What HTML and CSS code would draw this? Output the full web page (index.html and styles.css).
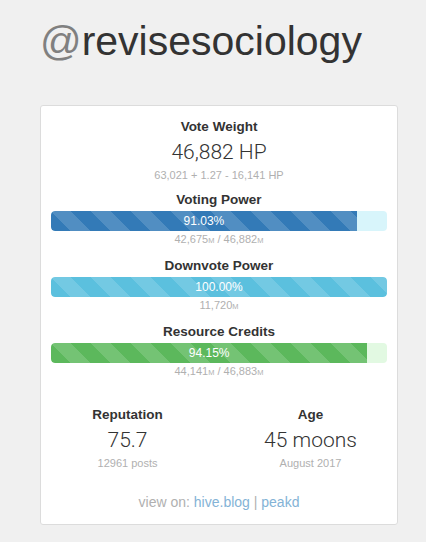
FILE: index.html
```html
<!DOCTYPE html>
<html lang="en">
<head>
  <meta charset="UTF-8" />
  <title>@revisesociology</title>
  <meta name="viewport" content="width=device-width, initial-scale=1.0" />
  <link rel="stylesheet" href="styles.css">
</head>
<body>
  <h1 class="account"><span class="at">@</span>revisesociology</h1>

  <div class="card">
    <h4 class="label">Vote Weight</h4>
    <div class="big">46,882 HP</div>
    <div class="sub">63,021 + 1.27 - 16,141 HP</div>

    <h4 class="label gap">Voting Power</h4>
    <div class="bar bar-vote">
      <div class="fill" style="width: 91.03%">91.03%</div>
    </div>
    <div class="sub">42,675<small>M</small> / 46,882<small>M</small></div>

    <h4 class="label gap">Downvote Power</h4>
    <div class="bar bar-down">
      <div class="fill full" style="width: 100%">100.00%</div>
    </div>
    <div class="sub">11,720<small>M</small></div>

    <h4 class="label gap">Resource Credits</h4>
    <div class="bar bar-rc">
      <div class="fill" style="width: 94.15%">94.15%</div>
    </div>
    <div class="sub">44,141<small>M</small> / 46,883<small>M</small></div>

    <div class="stats">
      <div class="stat">
        <h4 class="label">Reputation</h4>
        <div class="big">75.7</div>
        <div class="sub">12961 posts</div>
      </div>
      <div class="stat">
        <h4 class="label">Age</h4>
        <div class="big">45 moons</div>
        <div class="sub">August 2017</div>
      </div>
    </div>

    <p class="view-on">view on: <a href="#">hive.blog</a> | <a href="#">peakd</a></p>
  </div>
</body>
</html>
```

FILE: styles.css
```css
* {
  box-sizing: border-box;
  margin: 0;
  padding: 0;
  font-family: 'Liberation Sans', Arial, sans-serif;
}
body {
  background-color: #f0f0f0;
  padding: 18px 28px 0 40px;
  color: #333;
}
.account {
  font-size: 41px;
  font-weight: normal;
  line-height: 46px;
  color: #333;
  margin-bottom: 41px;
}
.account .at {
  color: #808080;
}
.card {
  background: white;
  border: 1px solid #dcdcdc;
  border-radius: 3px;
  padding: 11px 10px 13px;
  text-align: center;
}
.label {
  font-size: 13.5px;
  font-weight: bold;
  line-height: 20px;
  color: #333;
}
.label.gap {
  margin-top: 7px;
}
.big {
  font-family: Roboto, 'Liberation Sans', sans-serif;
  font-size: 21px;
  font-weight: 300;
  line-height: 30px;
  color: #333;
}
.sub {
  font-size: 11px;
  line-height: 16px;
  color: #b0b0b0;
}
.sub small {
  font-size: 7.5px;
}
.bar {
  margin-top: 1px;
  height: 20px;
  border-radius: 4px;
  overflow: hidden;
}
.fill {
  height: 100%;
  border-radius: 4px 0 0 4px;
  color: white;
  font-size: 12px;
  line-height: 20px;
  background-image: linear-gradient(45deg, rgba(255,255,255,.15) 25%, transparent 25%, transparent 50%, rgba(255,255,255,.15) 50%, rgba(255,255,255,.15) 75%, transparent 75%, transparent);
  background-size: 40px 40px;
}
.fill.full {
  border-radius: 4px;
}
.bar-vote {
  background-color: #d8f5fb;
}
.bar-vote .fill {
  background-color: #337ab7;
}
.bar-down {
  background-color: #d8f5fb;
}
.bar-down .fill {
  background-color: #5bc0de;
}
.bar-rc {
  background-color: #e2f9e2;
}
.bar-rc .fill {
  background-color: #5cb85c;
}
.stats {
  display: grid;
  grid-template-columns: 1fr 1fr;
  margin: 24px -15px 0;
}
.view-on {
  margin-top: 22px;
  font-size: 14px;
  line-height: 18px;
  color: #b0b0b0;
}
.view-on a {
  color: #84b3d6;
  text-decoration: none;
}
```
